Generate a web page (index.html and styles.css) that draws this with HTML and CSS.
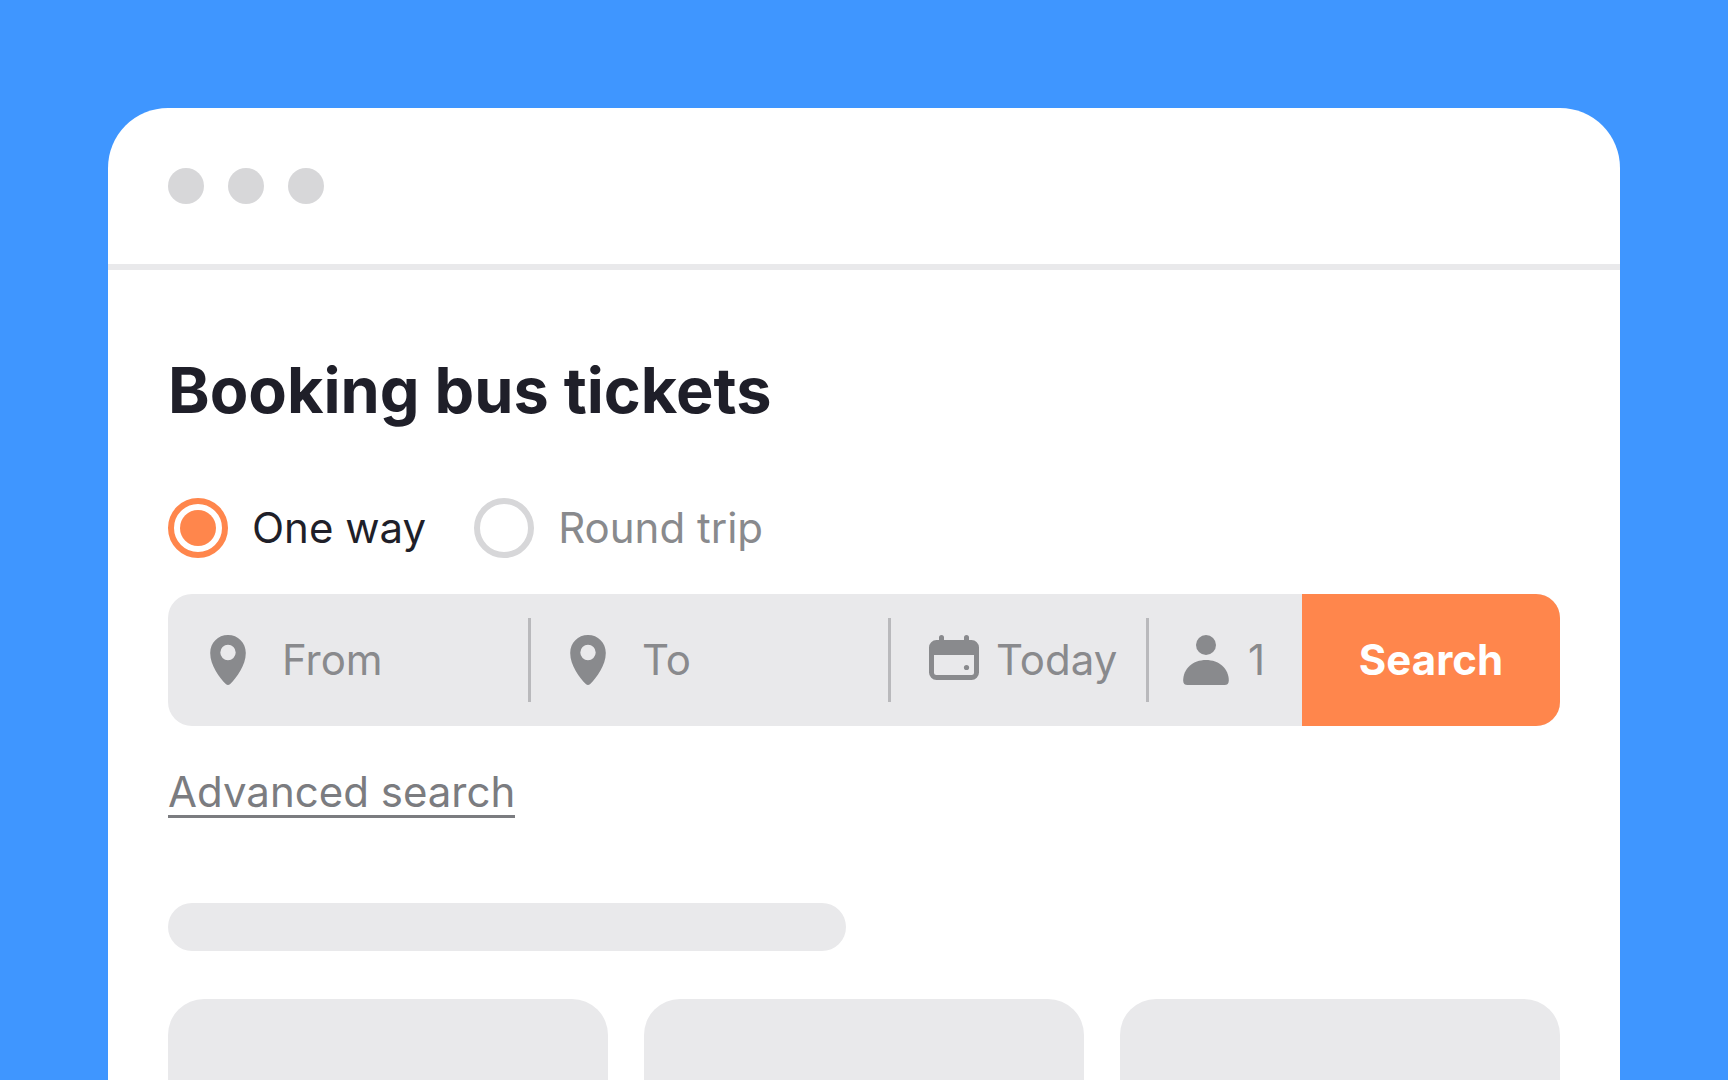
FILE: index.html
```html
<!DOCTYPE html>
<html lang="en">
<head>
  <meta charset="utf-8">
  <meta name="viewport" content="width=device-width, initial-scale=1">
  <title>Booking bus tickets</title>
  <link rel="stylesheet" href="styles.css">
</head>
<body>
  <div class="window">
    <header class="window-bar">
      <span class="dot"></span>
      <span class="dot"></span>
      <span class="dot"></span>
    </header>
    <main class="content">
      <h1 class="title">Booking bus tickets</h1>
      <form class="booking">
        <div class="trip-type">
          <label class="option"><input class="radio" type="radio" name="trip" value="one-way" checked><span class="option-text">One way</span></label>
          <label class="option"><input class="radio" type="radio" name="trip" value="round"><span class="option-text">Round trip</span></label>
        </div>
        <div class="search-bar">
          <div class="field">
            <label class="field-icon" for="from" aria-label="From">
              <svg class="icon" viewBox="0 0 60 60" aria-hidden="true"><path fill-rule="evenodd" d="M30 5C20 5 12.200 12.700 12.200 23C12.200 35.500 21.500 47.500 27.800 54.100Q30 56 32.200 54.100C38.500 47.500 47.800 35.500 47.800 23C47.800 12.700 40 5 30 5ZM30 14.800A7.700 7.700 0 1 1 30 30.200A7.700 7.700 0 1 1 30 14.800Z"/></svg>
            </label>
            <input class="field-input" id="from" type="text" placeholder="From">
          </div>
          <div class="field divided">
            <label class="field-icon" for="to" aria-label="To">
              <svg class="icon" viewBox="0 0 60 60" aria-hidden="true"><path fill-rule="evenodd" d="M30 5C20 5 12.200 12.700 12.200 23C12.200 35.500 21.500 47.500 27.800 54.100Q30 56 32.200 54.100C38.500 47.500 47.800 35.500 47.800 23C47.800 12.700 40 5 30 5ZM30 14.800A7.700 7.700 0 1 1 30 30.200A7.700 7.700 0 1 1 30 14.800Z"/></svg>
            </label>
            <input class="field-input" id="to" type="text" placeholder="To">
          </div>
          <div class="field divided compact date">
            <label class="field-icon" for="date" aria-label="Date">
              <svg class="icon" viewBox="0 0 60 60" aria-hidden="true"><path fill-rule="evenodd" d="M15 10V7.500A2.500 2.500 0 0 1 20 7.500V10H40V7.500A2.500 2.500 0 0 1 45 7.500V10H47.500A7.500 7.500 0 0 1 55 17.500V42.500A7.500 7.500 0 0 1 47.500 50H12.500A7.500 7.500 0 0 1 5 42.500V17.500A7.500 7.500 0 0 1 12.500 10ZM10 25V42.500A2.500 2.500 0 0 0 12.500 45H47.500A2.500 2.500 0 0 0 50 42.500V25Z"/><circle cx="42.500" cy="37.500" r="2.600"/></svg>
            </label>
            <input class="field-input" id="date" type="text" value="Today">
          </div>
          <div class="field divided compact">
            <label class="field-icon" for="passengers" aria-label="Passengers">
              <svg class="icon" viewBox="0 0 60 60" aria-hidden="true"><circle cx="30" cy="15" r="10"/><path d="M30 30C43 30 52.800 38.500 52.800 50.500Q52.800 55 48.500 55H11.500Q7.200 55 7.200 50.500C7.200 38.500 17 30 30 30Z"/></svg>
            </label>
            <input class="field-input" id="passengers" type="text" inputmode="numeric" value="1">
          </div>
          <button class="search-button" type="submit">Search</button>
        </div>
        <a class="advanced" href="#">Advanced search</a>
      </form>
      <section class="results" aria-label="Results">
        <div class="skeleton-line"></div>
        <div class="skeleton-cards">
          <div class="skeleton-card"></div>
          <div class="skeleton-card"></div>
          <div class="skeleton-card"></div>
        </div>
      </section>
    </main>
  </div>
</body>
</html>
```

FILE: styles.css
```css
* {
  box-sizing: border-box;
}

body {
  display: flex;
  flex-direction: column;
  min-height: 100vh;
  margin: 0;
  padding: 108px 108px 0;
  background: #3f96ff;
  color: #1f1f29;
  font-family: Inter, "Liberation Sans", sans-serif;
  font-size: 42px;
  line-height: 60px;
}

.window {
  display: flex;
  flex: 1;
  flex-direction: column;
  border-radius: 60px 60px 0 0;
  background: #fff;
}

.window-bar {
  display: flex;
  gap: 24px;
  padding: 60px;
  border-bottom: 6px solid #e9e9eb;
}

.dot {
  width: 36px;
  height: 36px;
  border-radius: 50%;
  background: #d7d7d9;
}

.content {
  display: flex;
  flex: 1;
  flex-direction: column;
  padding: 84px 60px 0;
}

.title {
  margin: 0 0 72px;
  font-size: 63px;
  font-weight: 700;
  line-height: 72px;
}

.booking {
  display: flex;
  flex-direction: column;
  align-items: flex-start;
  gap: 36px;
}

.trip-type {
  display: flex;
  gap: 48px;
}

.option {
  display: flex;
  gap: 24px;
}

.radio {
  flex: none;
  width: 60px;
  height: 60px;
  margin: 0;
  border: 6px solid #d7d7d9;
  border-radius: 50%;
  appearance: none;
  background: #fff;
}

.radio:checked {
  padding: 6px;
  border-color: #ff864c;
  background: #ff864c content-box;
}

.radio + .option-text {
  color: #898a8d;
}

.radio:checked + .option-text {
  color: #1f1f29;
}

.search-bar {
  display: grid;
  grid-template-columns: 1fr 1fr 258px 156px 258px;
  align-items: center;
  width: 100%;
  height: 132px;
  overflow: hidden;
  border-radius: 24px;
  background: #e9e9eb;
  color: #898a8d;
}

.field {
  display: flex;
  align-items: center;
  gap: 24px;
  min-width: 0;
  height: 84px;
  padding-left: 30px;
}

.divided {
  padding-left: 27px;
  border-left: 3px solid #b9b9bc;
}

.compact {
  gap: 12px;
}

.date {
  padding-left: 33px;
}

.field-icon {
  display: flex;
  flex: none;
}

.icon {
  width: 60px;
  height: 60px;
  fill: #898a8d;
}

.field-input {
  flex: 1;
  width: 0;
  min-width: 0;
  height: 60px;
  padding: 0;
  border: 0;
  outline: 0;
  background: none;
  color: inherit;
  font: inherit;
}

.field-input::placeholder {
  color: inherit;
  opacity: 1;
}

.search-button {
  align-self: stretch;
  padding: 0;
  border: 0;
  background: #ff864c;
  color: #fff;
  font: inherit;
  font-weight: 700;
}

.advanced {
  margin-top: 7px;
  border-bottom: 3px solid #7b7c80;
  color: #7b7c80;
  line-height: 46px;
  text-decoration: none;
}

.results {
  display: flex;
  flex: 1;
  flex-direction: column;
  gap: 48px;
  padding-top: 85px;
}

.skeleton-line {
  max-width: 678px;
  height: 48px;
  border-radius: 24px;
  background: #e9e9eb;
}

.skeleton-cards {
  display: grid;
  flex: 1;
  grid-template-columns: repeat(3, 1fr);
  gap: 36px;
  min-height: 81px;
}

.skeleton-card {
  border-radius: 36px 36px 0 0;
  background: #e9e9eb;
}
```
